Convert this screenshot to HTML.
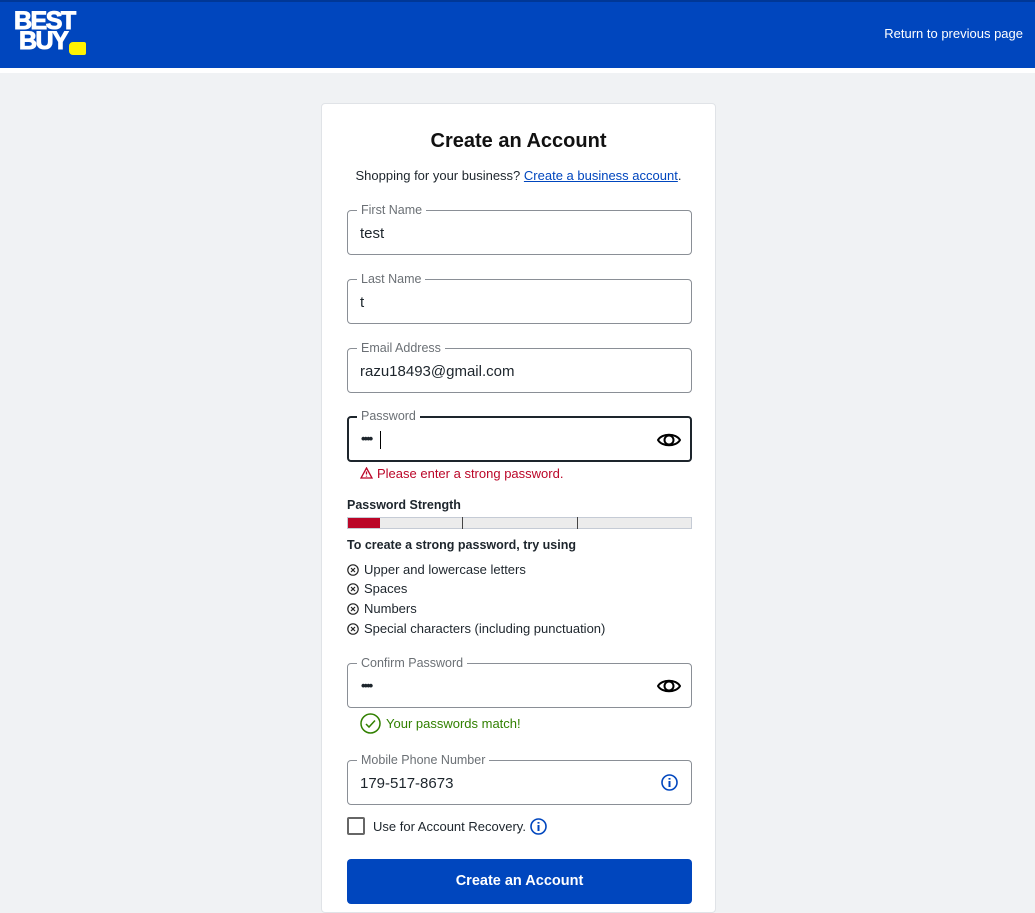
<!DOCTYPE html>
<html><head><meta charset="utf-8"><style>
*{box-sizing:border-box;margin:0;padding:0}
body{width:1035px;height:905px;overflow:hidden;background:#f0f2f4;font-family:"Liberation Sans",Arial,sans-serif;color:#1d252c;position:relative}
.hdr{position:absolute;left:0;top:0;width:1035px;height:68px;background:#0046be;border-top:2px solid #003796}
.strip{position:absolute;left:0;top:68px;width:1035px;height:5px;background:#fff}
.logo{position:absolute;left:14px;top:11px;color:#fff;font-weight:bold;font-size:25px;line-height:20px;letter-spacing:-1.5px;font-family:"Liberation Sans",sans-serif;-webkit-text-stroke:1px #fff}
.tag{position:absolute;left:69px;top:42px;width:17px;height:13px;background:#fff200;border-radius:4px 2px 2px 4px}
.ret{position:absolute;right:12px;top:26px;color:#fff;font-size:13px}
.card{position:absolute;left:321px;top:103px;width:395px;height:810px;background:#fff;border:1px solid #e0e3e7;border-radius:4px}
.a{position:absolute}
.field{position:absolute;left:347px;width:345px;height:45px;border:1px solid #8a8f96;border-radius:4px}
.lbl{position:absolute;left:9px;top:-8px;background:#fff;padding:0 4px;font-size:12.5px;color:#6b7075;line-height:14px}
.val{position:absolute;left:12px;top:14px;font-size:15px;color:#1d252c}
.dots{position:absolute;left:13px;top:14px;font-size:13px;letter-spacing:-2px;font-weight:bold}
.li{position:absolute;left:347px;font-size:13px;color:#1d252c}
.x{display:inline-block;width:12px;height:12px;margin-right:5px;vertical-align:-2px}
</style></head><body>
<div class="hdr"></div><div class="strip"></div>
<div class="logo">BEST<br><span style="margin-left:5px">BUY</span></div><div class="tag"></div>
<div class="ret">Return to previous page</div>
<div class="card"></div>
<div class="a" style="left:321px;width:395px;top:130px;text-align:center;font-size:20px;font-weight:bold;color:#111">Create an Account</div>
<div class="a" style="left:321px;width:395px;top:168px;text-align:center;font-size:13px">Shopping for your business? <span style="color:#0046be;text-decoration:underline">Create a business account</span>.</div>
<div class="field" style="top:210px"><span class="lbl">First Name</span><span class="val">test</span></div>
<div class="field" style="top:279px"><span class="lbl">Last Name</span><span class="val">t</span></div>
<div class="field" style="top:348px"><span class="lbl">Email Address</span><span class="val">razu18493@gmail.com</span></div>
<div class="field" style="top:416px;border:2px solid #1d252c;height:46px"><span class="lbl" style="left:8px;top:-9px">Password</span><span class="dots" style="left:12px;top:13px">••••</span><span class="a" style="left:31px;top:13px;width:1px;height:18px;background:#000"></span>
<svg class="a" style="left:308px;top:13px" width="24" height="18" viewBox="0 0 24 18"><path d="M1 9C5 2 19 2 23 9C19 16 5 16 1 9Z" fill="none" stroke="#000" stroke-width="2"/><circle cx="12" cy="9" r="4.5" fill="none" stroke="#000" stroke-width="2"/></svg></div>
<div class="a" style="left:360px;top:466px;font-size:13px;color:#bb0628"><svg width="13" height="12" viewBox="0 0 13 12" style="vertical-align:-1px;margin-right:4px"><path d="M6.5 1L12 11H1Z" fill="none" stroke="#bb0628" stroke-width="1.3"/><path d="M6.5 4.5V7.5M6.5 8.8V9.6" stroke="#bb0628" stroke-width="1.3"/></svg>Please enter a strong password.</div>
<div class="li" style="top:498px;font-weight:bold;font-size:12.5px">Password Strength</div>
<div class="a" style="left:347px;top:517px;width:345px;height:12px;background:#ececec;border:1px solid #c5cbd5"></div>
<div class="a" style="left:348px;top:518px;width:32px;height:10px;background:#bb0628"></div>
<div class="a" style="left:462px;top:517px;width:1px;height:12px;background:#444"></div>
<div class="a" style="left:577px;top:517px;width:1px;height:12px;background:#444"></div>
<div class="li" style="top:538px;font-weight:bold;font-size:12.5px">To create a strong password, try using</div>
<div class="li" style="top:562px"><svg class="x" viewBox="0 0 12 12"><circle cx="6" cy="6" r="5.2" fill="none" stroke="#222" stroke-width="1.2"/><path d="M4 4l4 4M8 4l-4 4" stroke="#222" stroke-width="1.2"/></svg>Upper and lowercase letters</div>
<div class="li" style="top:581px"><svg class="x" viewBox="0 0 12 12"><circle cx="6" cy="6" r="5.2" fill="none" stroke="#222" stroke-width="1.2"/><path d="M4 4l4 4M8 4l-4 4" stroke="#222" stroke-width="1.2"/></svg>Spaces</div>
<div class="li" style="top:601px"><svg class="x" viewBox="0 0 12 12"><circle cx="6" cy="6" r="5.2" fill="none" stroke="#222" stroke-width="1.2"/><path d="M4 4l4 4M8 4l-4 4" stroke="#222" stroke-width="1.2"/></svg>Numbers</div>
<div class="li" style="top:621px"><svg class="x" viewBox="0 0 12 12"><circle cx="6" cy="6" r="5.2" fill="none" stroke="#222" stroke-width="1.2"/><path d="M4 4l4 4M8 4l-4 4" stroke="#222" stroke-width="1.2"/></svg>Special characters (including punctuation)</div>
<div class="field" style="top:663px"><span class="lbl">Confirm Password</span><span class="dots">••••</span>
<svg class="a" style="left:309px;top:13px" width="24" height="18" viewBox="0 0 24 18"><path d="M1 9C5 2 19 2 23 9C19 16 5 16 1 9Z" fill="none" stroke="#000" stroke-width="2"/><circle cx="12" cy="9" r="4.5" fill="none" stroke="#000" stroke-width="2"/></svg></div>
<div class="a" style="left:360px;top:713px;font-size:13px;color:#318000"><svg width="21" height="21" viewBox="0 0 21 21" style="vertical-align:-6px;margin-right:5px"><circle cx="10.5" cy="10.5" r="9.5" fill="none" stroke="#318000" stroke-width="1.5"/><path d="M6 11l3 3 6-6.5" fill="none" stroke="#318000" stroke-width="1.5"/></svg>Your passwords match!</div>
<div class="field" style="top:760px"><span class="lbl">Mobile Phone Number</span><span class="val">179-517-8673</span>
<svg class="a" style="left:313px;top:13px" width="17" height="17" viewBox="0 0 17 17"><circle cx="8.5" cy="8.5" r="7.5" fill="none" stroke="#0046be" stroke-width="1.6"/><path d="M8.5 7v6M8.5 4v1.6" stroke="#0046be" stroke-width="2"/></svg></div>
<div class="a" style="left:347px;top:817px;width:18px;height:18px;border:2px solid #666;border-radius:2px"></div>
<div class="a" style="left:373px;top:818px;font-size:13px">Use for Account Recovery. <svg width="17" height="17" viewBox="0 0 17 17" style="vertical-align:-4px"><circle cx="8.5" cy="8.5" r="7.5" fill="none" stroke="#0046be" stroke-width="1.6"/><path d="M8.5 7v6M8.5 4v1.6" stroke="#0046be" stroke-width="2"/></svg></div>
<div class="a" style="left:347px;top:859px;width:345px;height:45px;background:#0046be;border-radius:4px;color:#fff;font-weight:bold;font-size:14.5px;text-align:center;line-height:45px">Create an Account</div>
</body></html>
